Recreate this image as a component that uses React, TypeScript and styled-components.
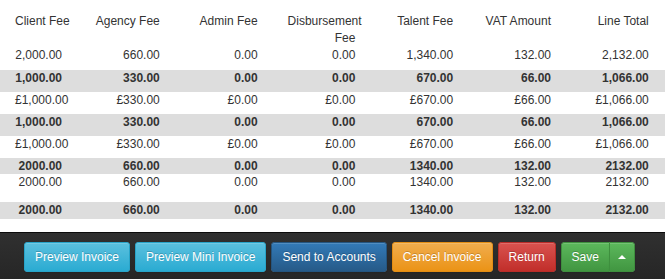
import React from "react";
import styled, { createGlobalStyle, css } from "styled-components";

const GlobalStyle = createGlobalStyle`
  html, body { margin: 0; padding: 0; background: #fff; }
  body {
    font-family: "Liberation Sans", Arial, Helvetica, sans-serif;
    font-size: 12px;
    color: #333;
  }
  * { box-sizing: border-box; }
`;

const Page = styled.div`
  width: 665px;
  height: 279px;
  display: flex;
  flex-direction: column;
  overflow: hidden;
`;

const Table = styled.div`
  flex: 1;
  padding-top: 13px;
`;

const Row = styled.div<{ $shade?: boolean; $bold?: boolean; $pb?: number; $lh?: number }>`
  display: grid;
  grid-template-columns: 77px repeat(6, 97.8px);
  background: ${(p) => (p.$shade ? "#dddddd" : "transparent")};
  font-weight: ${(p) => (p.$bold ? 700 : 400)};
  padding-bottom: ${(p) => p.$pb ?? 0}px;
  line-height: ${(p) => p.$lh ?? 17}px;
`;

const Cell = styled.div<{ $wrap?: boolean }>`
  padding: 0 15px;
  text-align: right;
  white-space: ${(p) => (p.$wrap ? "normal" : "nowrap")};
`;

const HeadCell = styled(Cell)`
  line-height: 17px;
`;

const Bar = styled.div`
  height: 47px;
  border-top: 1px solid #0c0c0c;
  background: linear-gradient(to bottom, #303030 0%, #262626 100%);
  display: flex;
  align-items: flex-start;
  gap: 5px;
  padding: 9px 0 0 24px;
`;

type Variant = "info" | "primary" | "warning" | "danger" | "success";

const palette: Record<Variant, [string, string, string]> = {
  info: ["#5bc0de", "#2aabd2", "#28a4c9"],
  primary: ["#337ab7", "#265a88", "#245580"],
  warning: ["#f0ad4e", "#eb9316", "#e38d13"],
  danger: ["#d9534f", "#c12e2a", "#b92c28"],
  success: ["#5cb85c", "#419641", "#3e8f3e"],
};

const Button = styled.button<{ $variant: Variant; $part?: "left" | "right" }>`
  font-family: "Liberation Sans", Arial, Helvetica, sans-serif;
  font-size: 12px;
  line-height: 18px;
  height: 30px;
  padding: 5px 10px;
  color: #fff;
  text-shadow: 0 -1px 0 rgba(0, 0, 0, 0.2);
  border-radius: 3px;
  border: 1px solid ${(p) => palette[p.$variant][2]};
  background-image: linear-gradient(
    to bottom,
    ${(p) => palette[p.$variant][0]} 0%,
    ${(p) => palette[p.$variant][1]} 100%
  );
  box-shadow: inset 0 1px 0 rgba(255, 255, 255, 0.15), 0 1px 1px rgba(0, 0, 0, 0.075);
  white-space: nowrap;
  cursor: pointer;
  display: inline-flex;
  align-items: center;
  ${(p) =>
    p.$part === "left" &&
    css`
      border-top-right-radius: 0;
      border-bottom-right-radius: 0;
    `}
  ${(p) =>
    p.$part === "right" &&
    css`
      border-top-left-radius: 0;
      border-bottom-left-radius: 0;
      margin-left: -1px;
      padding: 5px 8px;
    `}
`;

const Group = styled.div`
  display: flex;
`;

const Caret = styled.span`
  display: inline-block;
  width: 0;
  height: 0;
  border-left: 4px solid transparent;
  border-right: 4px solid transparent;
  border-bottom: 4px solid #fff;
`;

const headers = [
  "Client Fee",
  "Agency Fee",
  "Admin Fee",
  "Disbursement Fee",
  "Talent Fee",
  "VAT Amount",
  "Line Total",
];

type RowDef = { cells: string[]; shade?: boolean; bold?: boolean; pb?: number; lh?: number };

const a = ["2,000.00", "660.00", "0.00", "0.00", "1,340.00", "132.00", "2,132.00"];
const b = ["1,000.00", "330.00", "0.00", "0.00", "670.00", "66.00", "1,066.00"];
const c = ["£1,000.00", "£330.00", "£0.00", "£0.00", "£670.00", "£66.00", "£1,066.00"];
const d = ["2000.00", "660.00", "0.00", "0.00", "1340.00", "132.00", "2132.00"];

const rows: RowDef[] = [
  { cells: a, pb: 6 },
  { cells: b, shade: true, bold: true, pb: 5 },
  { cells: c, pb: 5 },
  { cells: b, shade: true, bold: true, pb: 5 },
  { cells: c, pb: 5 },
  { cells: d, shade: true, bold: true, lh: 16 },
  { cells: d, pb: 11 },
  { cells: d, shade: true, bold: true, lh: 17 },
];

export default function App() {
  return (
    <>
      <GlobalStyle />
      <Page>
        <Table>
          <Row>
            {headers.map((h) => (
              <HeadCell key={h} $wrap={h === "Disbursement Fee"}>
                {h}
              </HeadCell>
            ))}
          </Row>
          {rows.map((r, i) => (
            <Row key={i} $shade={r.shade} $bold={r.bold} $pb={r.pb} $lh={r.lh}>
              {r.cells.map((v, j) => (
                <Cell key={j}>{v}</Cell>
              ))}
            </Row>
          ))}
        </Table>
        <Bar>
          <Button $variant="info">Preview Invoice</Button>
          <Button $variant="info">Preview Mini Invoice</Button>
          <Button $variant="primary">Send to Accounts</Button>
          <Button $variant="warning">Cancel Invoice</Button>
          <Button $variant="danger">Return</Button>
          <Group>
            <Button $variant="success" $part="left">
              Save
            </Button>
            <Button $variant="success" $part="right" aria-label="More">
              <Caret />
            </Button>
          </Group>
        </Bar>
      </Page>
    </>
  );
}
